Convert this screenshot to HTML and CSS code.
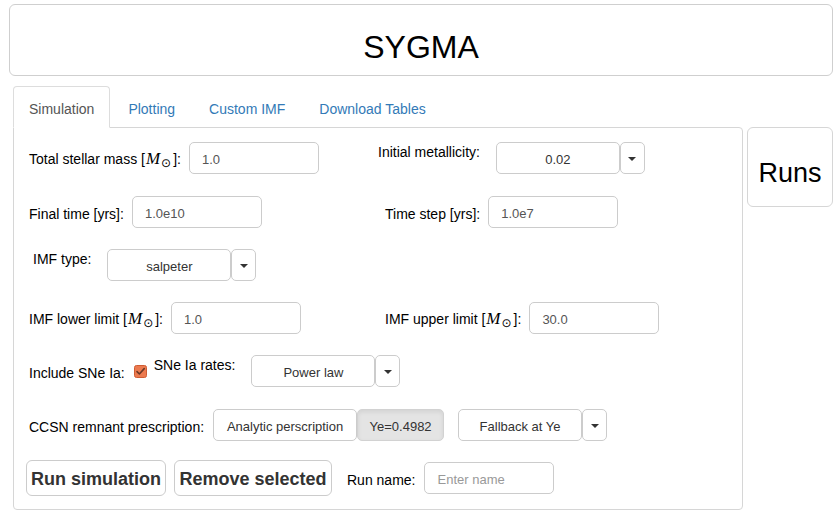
FILE: index.html
```html
<!DOCTYPE html>
<html>
<head>
<meta charset="utf-8">
<title>SYGMA</title>
<link rel="stylesheet" href="styles.css">
</head>
<body>
<div class="page">
  <header class="title-box">SYGMA</header>
  <div class="main">
    <div class="tabs-col">
      <ul class="nav-tabs">
        <li class="tab active">Simulation</li>
        <li class="tab">Plotting</li>
        <li class="tab">Custom IMF</li>
        <li class="tab">Download Tables</li>
      </ul>
      <div class="panel">
        <div class="row first">
          <div class="cell cell-left w-a">
            <span class="label">Total stellar mass [<span class="msun"><i>M</i><span class="sun">⊙</span></span>]:</span>
            <input class="text-input" type="text" value="1.0">
          </div>
          <div class="cell">
            <span class="label label-top">Initial metallicity:</span>
            <div class="dd"><button class="btn dd-main">0.02</button><button class="btn dd-caret"><span class="caret"></span></button></div>
          </div>
        </div>

        <div class="row g22">
          <div class="cell cell-left w-b">
            <span class="label">Final time [yrs]:</span>
            <input class="text-input" type="text" value="1.0e10">
          </div>
          <div class="cell">
            <span class="label">Time step [yrs]:</span>
            <input class="text-input" type="text" value="1.0e7">
          </div>
        </div>

        <div class="row">
          <div class="cell">
            <span class="label label-top">IMF type:</span>
            <div class="dd"><button class="btn dd-main">salpeter</button><button class="btn dd-caret"><span class="caret"></span></button></div>
          </div>
        </div>

        <div class="row">
          <div class="cell cell-left w-b">
            <span class="label">IMF lower limit [<span class="msun"><i>M</i><span class="sun">⊙</span></span>]:</span>
            <input class="text-input" type="text" value="1.0">
          </div>
          <div class="cell">
            <span class="label">IMF upper limit [<span class="msun"><i>M</i><span class="sun">⊙</span></span>]:</span>
            <input class="text-input" type="text" value="30.0">
          </div>
        </div>

        <div class="row">
          <span class="label">Include SNe Ia:</span>
          <svg class="check" width="13" height="13" viewBox="0 0 13 13" aria-hidden="true">
            <rect x="0.5" y="0.5" width="12" height="12" rx="2" fill="#ec7a4f" stroke="#cf5c33"/>
            <path d="M3 6.6 L5.4 9 L10.2 3.6" fill="none" stroke="#6b3826" stroke-width="1.6" stroke-linecap="round" stroke-linejoin="round"/>
          </svg>
          <span class="label label-top rates">SNe Ia rates:</span>
          <div class="dd"><button class="btn dd-main">Power law</button><button class="btn dd-caret"><span class="caret"></span></button></div>
        </div>

        <div class="row g22">
          <span class="label">CCSN remnant prescription:</span>
          <div class="toggle-group">
            <button class="btn tg-analytic">Analytic perscription</button><button class="btn tg-ye active">Ye=0.4982</button>
          </div>
          <div class="dd fallback"><button class="btn dd-main">Fallback at Ye</button><button class="btn dd-caret"><span class="caret"></span></button></div>
        </div>

        <div class="row last">
          <button class="btn big run">Run simulation</button>
          <button class="btn big remove">Remove selected</button>
          <span class="label runname">Run name:</span>
          <input class="text-input" type="text" placeholder="Enter name">
        </div>
      </div>
    </div>
    <div class="runs-box">Runs</div>
  </div>
</div>
</body>
</html>
```
FILE: styles.css
```css
html, body {
  margin: 0;
  padding: 0;
  background: #fff;
}

body {
  font-family: "Liberation Sans", Arial, sans-serif;
  font-size: 14px;
  color: #000;
}

.page {
  padding: 4px 7px 0 9px;
}

.title-box {
  border: 1px solid #cfcfcf;
  border-radius: 6px;
  text-align: center;
  font-size: 32px;
  line-height: 40px;
  padding: 22px 0 8px;
  color: #000;
}

.main {
  display: flex;
  gap: 4px;
  margin-top: 10px;
  padding-left: 4px;
}

.tabs-col {
  width: 730px;
  flex: none;
}

.nav-tabs {
  display: flex;
  list-style: none;
  margin: 0 0 -1px 0;
  padding: 0;
  position: relative;
  z-index: 1;
}

.tab {
  padding: 12px 15px 8px;
  line-height: 20px;
  border: 1px solid transparent;
  border-radius: 4px 4px 0 0;
  margin-right: 2px;
  color: #337ab7;
}

.tab.active {
  border-color: #ddd;
  border-bottom-color: #fff;
  background: #fff;
  color: #555;
}

.panel {
  border: 1px solid #d6d6d6;
  border-radius: 0 4px 4px 4px;
  padding: 14px 15px 13px;
}

.runs-box {
  width: 86px;
  height: 80px;
  box-sizing: border-box;
  margin-top: 41px;
  border: 1px solid #d6d6d6;
  border-radius: 6px;
  text-align: center;
  font-size: 27px;
  line-height: 32px;
  padding-top: 29px;
}

.row {
  display: flex;
  align-items: center;
  height: 32px;
  margin-top: 21px;
}

.row.first {
  margin-top: 0;
}

.row.g22 {
  margin-top: 22px;
}

.row.last {
  height: 36px;
  margin-top: 19px;
  margin-left: -3px;
}

.cell {
  display: flex;
  align-items: center;
  gap: 8px;
  height: 100%;
  flex: none;
}

.cell-left.w-a {
  width: 345px;
}

.cell-left.w-b {
  width: 356px;
}

.label {
  line-height: 20px;
  padding-top: 3px;
  white-space: nowrap;
}

.label-top {
  align-self: flex-start;
  padding: 0 8px 0 4px;
}

.msun {
  margin-left: 1px;
  margin-right: 2px;
}

.msun i {
  font-family: "Liberation Serif", "Times New Roman", serif;
  font-size: 17px;
  font-style: italic;
}

.sun {
  font-family: "DejaVu Sans", sans-serif;
  font-size: 12px;
  position: relative;
  top: 3px;
  margin-left: 1px;
}

.text-input {
  width: 130px;
  height: 32px;
  box-sizing: border-box;
  border: 1px solid #ccc;
  border-radius: 5px;
  padding: 2px 12px 0;
  margin: 0;
  font-family: "Liberation Sans", Arial, sans-serif;
  font-size: 13px;
  color: #555;
  background: #fff;
  outline: none;
}

.text-input::placeholder {
  color: #999;
}

.dd {
  display: flex;
  height: 32px;
}

.btn {
  box-sizing: border-box;
  height: 32px;
  margin: 0;
  padding: 2px 0 0;
  border: 1px solid #ccc;
  border-radius: 5px;
  background: #fff;
  color: #333;
  font-family: "Liberation Sans", Arial, sans-serif;
  font-size: 13px;
  display: flex;
  align-items: center;
  justify-content: center;
  white-space: nowrap;
}

.dd-main {
  width: 124px;
}

.dd-caret {
  width: 25px;
}

.caret {
  width: 0;
  height: 0;
  border-top: 4px solid #333;
  border-left: 4px solid transparent;
  border-right: 4px solid transparent;
}

.check {
  margin-left: 9px;
  flex: none;
}

.label-top.rates {
  padding-left: 7px;
  margin-right: 8px;
}

.toggle-group {
  display: flex;
  margin-left: 9px;
}

.tg-analytic {
  width: 144px;
}

.tg-ye {
  width: 87px;
}

.tg-ye.active {
  background: #e4e4e4;
  border-color: #d2d2d2;
  box-shadow: inset 0 2px 4px rgba(0, 0, 0, 0.08);
}

.fallback {
  margin-left: 14px;
}

.btn.big {
  height: 36px;
  font-size: 18px;
  font-weight: bold;
  border-radius: 6px;
  color: #333;
}

.run {
  width: 140px;
}

.remove {
  width: 158px;
  margin-left: 8px;
}

.runname {
  margin-left: 15px;
  margin-right: 9px;
}
```
